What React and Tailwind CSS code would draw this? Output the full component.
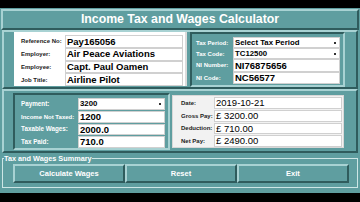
import React from 'react';

const raised = 'border-2 border-t-[#a8d2d3] border-l-[#a8d2d3] border-b-[#2f5c5d] border-r-[#2f5c5d]';
const sunken = 'border-2 border-t-[#2f5c5d] border-l-[#2f5c5d] border-b-[#a8d2d3] border-r-[#a8d2d3]';

const Arrow = () => <span className="absolute right-[3px] top-1/2 -mt-[1px] w-[2px] h-[2px] bg-[#333]" />;

const Field = ({ value, combo, small, regular, className = '' }) => (
    <div className={`relative flex-1 h-full bg-white border border-[#d0d0d0] flex items-center pl-[1px] text-black leading-none ${small ? 'text-[7.8px]' : 'text-[9.5px]'} ${regular ? 'font-normal' : 'font-bold'} ${className}`}>
        {value}
        {combo && <Arrow />}
    </div>
);

const Row = ({ label, labelW, labelClass, children, h = 'h-[13px]' }) => (
    <div className={`flex items-center ${h}`}>
        <span className={`shrink-0 font-bold leading-none whitespace-nowrap ${labelW} ${labelClass}`}>{label}</span>
        {children}
    </div>
);

export default function App() {
    return (
        <div className="w-[360px] h-[202px] bg-black flex flex-col overflow-hidden font-['Liberation_Sans',Arial,sans-serif]">
            <div className="h-[8px] shrink-0" />
            <div className="h-[185px] shrink-0 bg-[#5f9ea0] flex flex-col px-[1px]">
                {/* title */}
                <div className={`mt-[1px] h-[21px] shrink-0 ${raised} flex items-center justify-center`}>
                    <h1 className="text-white font-bold text-[12.3px] leading-none">Income Tax and Wages Calculator</h1>
                </div>

                {/* employee section */}
                <div className={`h-[59px] shrink-0 mx-[1px] ${raised} flex items-start pl-[10px]`}>
                    <div className="w-[173px] h-[54px] bg-white border-r-2 border-[#dcdcdc] flex flex-col pt-[3px] pl-[7px] pr-[2px]">
                        {[
                            ['Reference No:', 'Pay165056'],
                            ['Employer:', 'Air Peace Aviations'],
                            ['Employee:', 'Capt. Paul Oamen'],
                            ['Job Title:', 'Airline Pilot'],
                        ].map(([l, v]) => (
                            <Row key={l} label={l} labelW="w-[44px]" labelClass="text-[6px] text-[#222]">
                                <Field value={v} />
                            </Row>
                        ))}
                    </div>
                    <div className={`ml-[3px] w-[155px] h-[55px] ${sunken} flex flex-col pt-[3px] pl-[4px] pr-[3px]`}>
                        <Row label="Tax Period:" labelW="w-[37px]" labelClass="text-[6px] text-white" h="h-[11px]">
                            <Field value="Select Tax Period" combo small />
                        </Row>
                        <Row label="Tax Code:" labelW="w-[37px]" labelClass="text-[6px] text-white" h="h-[11px]">
                            <Field value="TC12500" combo small />
                        </Row>
                        <Row label="NI Number:" labelW="w-[37px]" labelClass="text-[6px] text-white" h="h-[12.5px]">
                            <Field value="NI76875656" />
                        </Row>
                        <Row label="NI Code:" labelW="w-[37px]" labelClass="text-[6px] text-white" h="h-[12.5px]">
                            <Field value="NC56577" />
                        </Row>
                    </div>
                </div>

                {/* wages section */}
                <div className={`h-[64px] shrink-0 mx-[1px] ${raised} flex items-start pl-[9px] pt-[2px]`}>
                    <div className={`w-[157px] h-[57px] ${sunken} flex flex-col pt-[3px] pl-[6px] pr-[3px] gap-[1px]`}>
                        <Row label="Payment:" labelW="w-[57px]" labelClass="text-[6.3px] text-white" h="h-[12px]">
                            <Field value="3200" combo small />
                        </Row>
                        <Row label="Income Not Taxed:" labelW="w-[57px]" labelClass="text-[6px] text-white" h="h-[12px]">
                            <Field value="1200" />
                        </Row>
                        <Row label="Taxable Wages:" labelW="w-[57px]" labelClass="text-[6.3px] text-white" h="h-[12px]">
                            <Field value="2000.0" />
                        </Row>
                        <Row label="Tax Paid:" labelW="w-[57px]" labelClass="text-[6.3px] text-white" h="h-[12px]">
                            <Field value="710.0" />
                        </Row>
                    </div>
                    <div className="ml-[2px] mt-[2px] w-[172px] h-[53px] bg-[#f2f2f2] border border-[#d8d8d8] flex flex-col pt-[1px] pl-[8px] pr-[1px] gap-[1px]">
                        <Row label="Date:" labelW="w-[33px]" labelClass="text-[6px] text-[#222]" h="h-[12px]">
                            <Field value="2019-10-21" regular />
                        </Row>
                        <Row label="Gross Pay:" labelW="w-[33px]" labelClass="text-[6px] text-[#222]" h="h-[12px]">
                            <Field value="£ 3200.00" regular />
                        </Row>
                        <Row label="Deduction:" labelW="w-[33px]" labelClass="text-[6px] text-[#222]" h="h-[12px]">
                            <Field value="£ 710.00" regular />
                        </Row>
                        <Row label="Net Pay:" labelW="w-[33px]" labelClass="text-[6px] text-[#222]" h="h-[12px]">
                            <Field value="£ 2490.00" regular />
                        </Row>
                    </div>
                </div>

                {/* summary */}
                <fieldset className="mt-[1px] mx-[1px] h-[34px] border border-[#cde6e6] pl-[1px]">
                    <legend className="text-white font-bold text-[7.3px] leading-[9px] px-0">Tax and Wages Summary</legend>
                    <div className="flex ml-[9px] mt-[1px]">
                        {['Calculate Wages', 'Reset', 'Exit'].map(b => (
                            <button
                                key={b}
                                className={`w-[112px] h-[19px] ${raised} bg-[#5f9ea0] text-white font-bold text-[7.5px] leading-none flex items-center justify-center`}
                            >
                                {b}
                            </button>
                        ))}
                    </div>
                </fieldset>
            </div>
        </div>
    );
}
